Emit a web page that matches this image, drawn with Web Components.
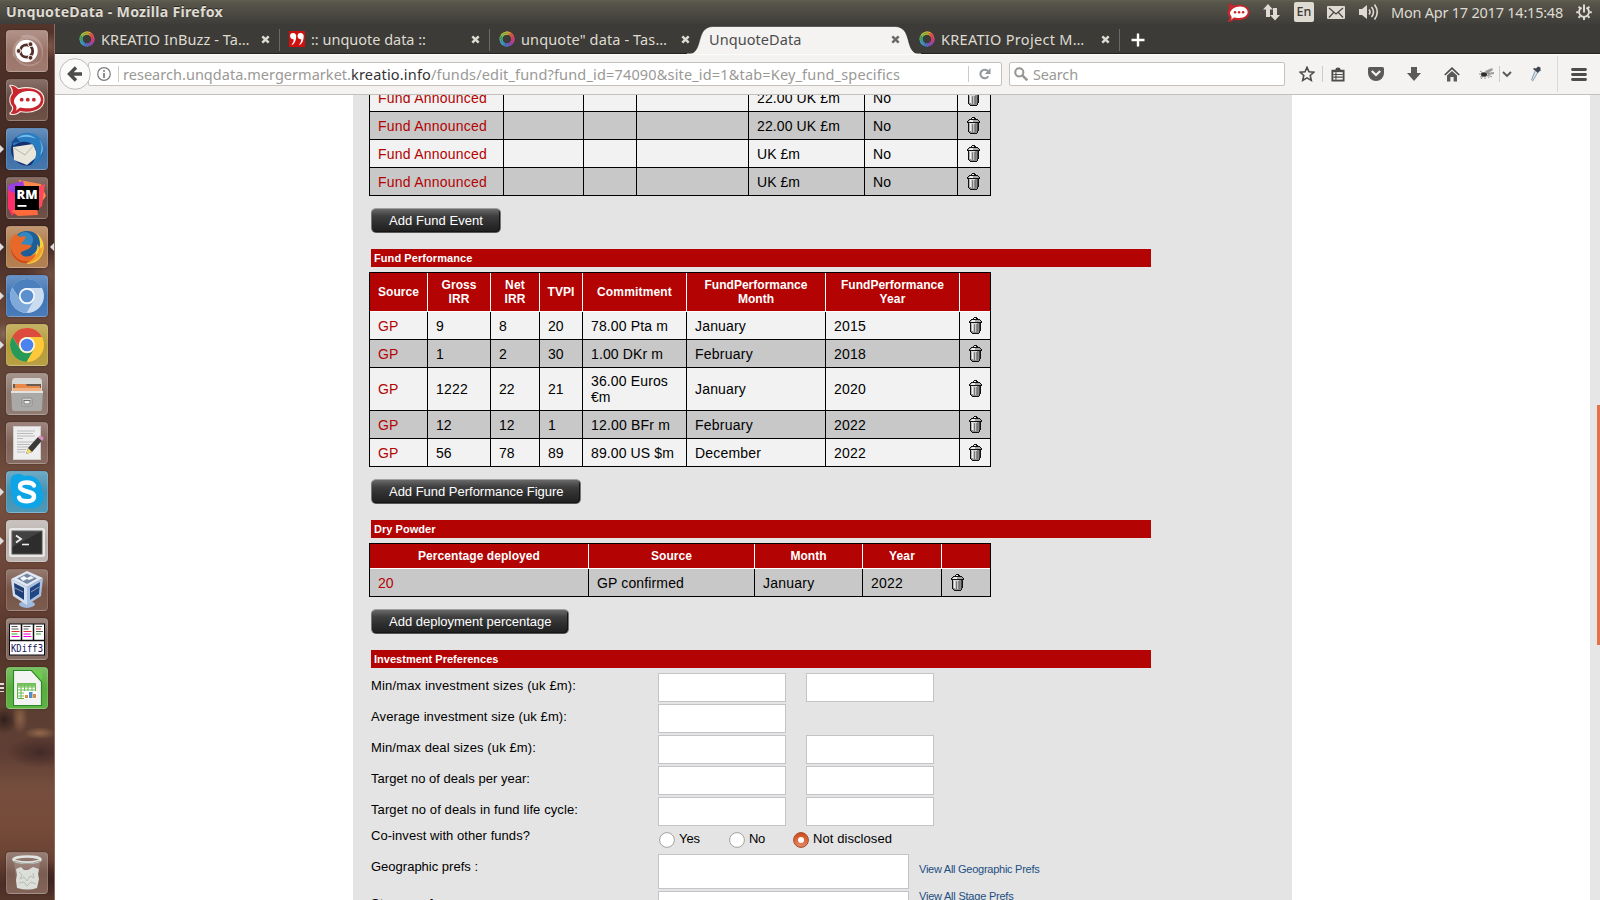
<!DOCTYPE html>
<html lang="en">
<head>
<meta charset="utf-8">
<title>UnquoteData</title>
<style>
html,body{margin:0;padding:0;height:100%;overflow:hidden;background:#fff}
body{font-family:"Liberation Sans",Arial,sans-serif;font-size:14px;color:#000}
</style>
</head>
<body>
<desktop-shell></desktop-shell>
<script>
const UI = '"Noto Sans","Open Sans",sans-serif';
const define = (name, html, extra) => customElements.define(name, class extends HTMLElement {
  constructor(){ super(); this.attachShadow({mode:'open'}); }
  connectedCallback(){
    if (this.done) return; this.done = true;
    this.shadowRoot.innerHTML = typeof html === 'function' ? html(this) : html;
    if (extra) extra(this);
  }
});

/* Text run whose tracking is adjusted to a given advance width. */
const runs = [];
define('fit-text', '<style>:host{display:inline-block;white-space:pre}</style><span><slot></slot></span>', el => runs.push(el));
const fitAll = () => runs.forEach(el => {
  const span = el.shadowRoot.querySelector('span');
  const w = parseFloat(el.getAttribute('w')), n = el.textContent.length;
  if (!w) return;
  span.style.letterSpacing = ((w - span.getBoundingClientRect().width) / n).toFixed(3) + 'px';
});

const ringColors = ['#e8a33a','#e2574c','#d9418c','#8a4fc0','#3f7fd0','#35a7c9','#3fb568','#a8c83a'];
const ring = `<svg width="16" height="16" viewBox="0 0 16 16">${ringColors.map((c,i)=>`<path d="M7 .3Q12.800 .2 13.600 4.600L11.600 5.600Q9.600 2.800 5.800 3.100Z" fill="${c}" transform="rotate(${i*45} 8 8)"/>`).join('')}<circle cx="8" cy="8" r="6" fill="none" stroke="#8a2f3a" stroke-opacity=".45" stroke-width="1"/></svg>`;
const quote = '<svg width="16" height="16" viewBox="0 0 16 16"><path fill="#d20f0f" d="M0 0h16v16H0z"/><path fill="#fff" d="M4.200 2a2.900 2.900 0 0 1 3 3.200c0 4-1.300 6.900-4 8.900l-.6-.7C4.200 11.800 4.700 10.300 4.700 8.200A2.900 2.900 0 0 1 1.100 5.100 3 3 0 0 1 4.200 2zM11.700 2a2.900 2.900 0 0 1 3 3.200c0 4-1.300 6.900-4 8.900l-.6-.7c1.600-1.600 2.100-3.100 2.100-5.200a2.900 2.900 0 0 1-3.600-3.100A3 3 0 0 1 11.700 2z"/></svg>';
const cross = c => `<svg width="9" height="9" viewBox="0 0 9 9"><path d="M1.300 1.300l6.400 6.400M7.700 1.300L1.300 7.700" stroke="${c}" stroke-width="2.500"/></svg>`;

const rocket = '<path d="M1 2c4 0 7 2 9 4 16-4 29 2 29 12S27 34 12 31c-3 3-7 4-11 3 3-3 4-5 3-8C0 22 0 14 4 11 4 7 3 4 1 2z" fill="#c9252d"/><path d="M8 14c4-5 10-6 15-6 8 0 13 5 13 10s-6 10-15 10c-4 0-7-1-9-1l-5 4c2-3 1-5 0-7-3-3-2-7 1-10z" fill="#fff"/><circle cx="14" cy="18" r="2.200" fill="#c9252d"/><circle cx="21" cy="18" r="2.200" fill="#c9252d"/><circle cx="28" cy="18" r="2.200" fill="#c9252d"/>';

/* ---------- top panel ---------- */
define('top-panel', `<style>
:host{display:flex;height:24px;box-sizing:border-box;padding:0 8px 0 6px;align-items:center;background:linear-gradient(#625f52 0,#59564b 2px,#3e3d39 24px);color:#dfdbd2;font:14.500px/24px ${UI}}
b{font-size:14.200px;text-shadow:0 -1px 0 #2a2926}
.sp{flex:1} svg{display:block;flex:none}
.en{width:20px;height:20px;border-radius:2px;background:#dfdbd2;color:#3c3b37;font:500 12.500px/20px ${UI};text-align:center;margin:0 13px 0 14px}
</style>
<b><fit-text w="217">UnquoteData - Mozilla Firefox</fit-text></b><span class="sp"></span>
<svg width="23" height="20" viewBox="0 0 40 35" preserveAspectRatio="none">${rocket}</svg>
<svg style="margin-left:13px" width="17" height="18" viewBox="0 0 17 18" fill="#dfdbd2"><path d="M5 1l5 5.500H7V14H3V6.500H0zM12 17.500l-5-5.500h3V5h4v7h3z"/></svg>
<span class="en">En</span>
<svg width="18" height="13" viewBox="0 0 18 13"><rect width="18" height="13" rx="1" fill="#dfdbd2"/><path d="M2 2l7 6 7-6M2 11.500l4.500-5M16 11.500l-4.500-5" fill="none" stroke="#47463f" stroke-width="1.200"/></svg>
<svg style="margin-left:14px" width="20" height="18" viewBox="0 0 20 18"><path d="M0 6h3l5-4v14l-5-4H0z" fill="#dfdbd2"/><path d="M10 6.500q2 2.500 0 5M12.500 4q4 5 0 10M15.500 1.500q5.500 7.500 0 15" fill="none" stroke="#dfdbd2" stroke-width="1.600"/></svg>
<fit-text w="172" style="margin:0 13px 0 12px">Mon Apr 17 2017 14:15:48</fit-text>
<svg width="16" height="16" viewBox="0 0 16 16" fill="none" stroke="#dfdbd2"><path d="M5.600 3.600a5 5 0 1 0 4.800 0" stroke-width="1.900"/><path d="M8 .5v8" stroke-width="2"/><path d="M2.600 2.600l1.600 1.600M13.400 2.600l-1.600 1.600M.2 8.300h2.300M13.500 8.300h2.300M2.500 13.800l1.700-1.700M13.500 13.800l-1.700-1.700M8 13.500V16" stroke-width="2"/></svg>`);

/* ---------- launcher ---------- */
const ball = (a,b,c,hub) => `<circle cx="21" cy="21" r="17" fill="${c}"/><path d="M6.300 12.500A17 17 0 0 1 36 13H21a8 8 0 0 0-7.500 10.500z" fill="${a}"/><path d="M6.300 12.500A17 17 0 0 0 20.500 38l7.500-13a8 8 0 0 1-14.500-1z" fill="${b}"/><circle cx="21" cy="21" r="8" fill="#fff" fill-opacity=".85"/><circle cx="21" cy="21" r="6.300" fill="${hub}"/>`;
const apps = [
 ['#9b7468', '<path d="M7 27C3 11 20 2 32 9 20 3 8 14 12 25M14 6c18-6 29 12 20 26 6-15-4-25-16-23M36 30C26 42 6 36 8 19c2 14 13 19 24 13" fill="#fff" opacity=".2"/><circle cx="20.500" cy="21" r="11.200" fill="#fff"/><circle cx="20.500" cy="21" r="6.200" fill="none" stroke="#542f28" stroke-width="2.800" stroke-dasharray="11.600 1.400" stroke-dashoffset="-7"/><g fill="#542f28" stroke="#fff" stroke-width=".9"><circle cx="12.600" cy="21" r="2.400"/><circle cx="24.500" cy="14.200" r="2.400"/><circle cx="24.500" cy="27.800" r="2.400"/></g>'],
 ['#66483e', `<g transform="translate(3.500 5) scale(.87)"><g stroke="#f7eeea" stroke-width="2.500" stroke-linejoin="round">${rocket.replace(/<circle.*/,'')}</g>${rocket}</g>`],
 ['#3c6fa8', '<circle cx="21" cy="21.500" r="16" fill="#14306e"/><path d="M7 19l20-3 5 12-11 9-13-5z" fill="#e9e6dc"/><path d="M8 20l11 7 9-10" fill="none" stroke="#b9b5a8"/><path d="M7 18C7 9 15 4 24 5c10 1 14 10 13 18-1 8-6 13-13 15 7-7 8-16 3-21-6-5-13-4-20 1z" fill="#2a7cc0"/><path d="M27 6c7 3 11 12 7 21 5-3 4-15-7-21zM10 11c6-5 14-6 20 0-7-3-13-3-20 0z" fill="#74bde8"/><path d="M5 15l5-6 4 5z" fill="#1b4d92"/>'],
 ['#66483e', '<path d="M13 3l22 4 5 12-8 11-20-7z" fill="#ff8a4c"/><path d="M2 8l15-4 3 12-13 14-5-5z" fill="#9a3fe0"/><path d="M2 13l8 4 2 15-6 7-4-8z" fill="#fc2f6b"/><path d="M5 34l14-4 12 2 1 6-20 1z" fill="#ff6a3d"/><path d="M31 10l8-3-3 22-6 5z" fill="#fc4a5a"/><rect x="9" y="9" width="24" height="24" fill="#000"/><text x="10.500" y="21.500" font-family="Open Sans,sans-serif" font-weight="800" font-size="13" fill="#fff" textLength="21" lengthAdjust="spacingAndGlyphs">RM</text><rect x="11.500" y="28" width="9" height="1.800" fill="#fff"/>'],
 ['#b07a4a', '<circle cx="21" cy="20" r="15" fill="#1d5d98"/><circle cx="19" cy="14" r="8" fill="#3f9bd0" opacity=".7"/><path d="M30 7c7 5 9 12 7 19-2 8-9 12-16 12l5-9c5-3 6-7 5-11 2 2 2 4 2 5 2-5 1-11-3-16z" fill="#f9cf3c"/><path d="M5 13c1-2 3-4 5-5l4 3 5-1c1 2 0 4-3 6l-1 2c5 1 8 0 11 2-2 1-2 3-6 4-3 1-6 2-5 4 3 4 10 3 15-1-1 7-7 11-13 10C8 36 2 26 5 13z" fill="#e8682a"/><path d="M5 22c2 11 14 18 26 10-7 7-17 6-22 0-3-3-4-7-4-10z" fill="#c8401b"/><path d="M37 20c0 10-8 17-17 17 8-3 13-9 13-17l2 3z" fill="#f3a02a"/>'],
 ['#3f74b4', ball('#4b7fbd','#7fa9da','#c9dcf0','#5b8fce')],
 ['#b59c3a', ball('#dc4b3e','#279a5a','#fdc93b','#4a82ee')],
 ['#8c766c', '<path d="M6 9q0-4 3-4h24q3 0 3 4v10H6z" fill="#d6d6d4"/><path d="M7 11h28v9H7z" fill="#6b5a50"/><path d="M9 11h11l1 2h13v7H9z" fill="#e8894a"/><path d="M7 15h28v4H7z" fill="#f0b184"/><path d="M5 18h32l-1 18q0 2-2 2H8q-2 0-2-2z" fill="#a9a9a8"/><path d="M5 18h32v2H5z" fill="#e2e2e0"/><rect x="16" y="25" width="10" height="8" rx="1.500" fill="#cfcfcf" stroke="#8a8a8a"/><rect x="18" y="27.500" width="6" height="3.500" fill="#eee" stroke="#666" stroke-width=".9"/>'],
 ['#816258', '<rect x="7.500" y="4.500" width="27" height="33" fill="#eee" stroke="#cfcfcf"/><path d="M11 9h18M11 11.500h16M11 14h18M11 16.500h6M11 20h17M11 22.500h13M11 25h14M11 27.500h9M11 30h8" stroke="#bbb" stroke-width="1"/><path d="M20 32l2-6 10-11 4 3.500L26 30z" fill="#3a3a38"/><path d="M20 32l2-6 4 4z" fill="#f1dc72"/><path d="M32 15l2-1.500q4 1 3.500 3.500L36 19z" fill="#d98fc0"/>'],
 ['#4592b4', '<path d="M5 12C2 3 14 1 18 5c10-3 19 6 18 15 4 6-1 19-11 17C14 40 4 32 6 21q-3-4-1-9z" fill="#0ea5e6"/><path d="M28 14.500C26 10.500 14 10 14 15.500c0 6 14 3.500 14 10 0 6.500-13.500 6-15 1" fill="none" stroke="#fff" stroke-width="4.400" stroke-linecap="round"/>'],
 ['#b9b1ae', '<rect x="3" y="8" width="36" height="29" rx="2.500" fill="#e9e7e5"/><rect x="6" y="11" width="30" height="23" fill="#2c2d2c" stroke="#555"/><path d="M6 11h30L6 27z" fill="#fff" opacity=".1"/><path d="M10 15.500l5 3.500-5 3.500" fill="none" stroke="#eee" stroke-width="1.800"/><path d="M16 24.500h7" stroke="#eee" stroke-width="1.600"/>'],
 ['#765447', '<path d="M14 29h14l-2 4c5 1 4 5-5 6-9-1-10-5-5-6z" fill="#9fb9dc"/><path d="M5 10l16-8 16 7-16 9z" fill="#dfe8f4"/><path d="M5 10l16 8v18L7 27z" fill="#d1dff0"/><path d="M37 9l-16 9v18l14-9z" fill="#a9c0e0"/><path d="M11 9.500l10-5 10 5-10 5.500z" fill="#5a6f8b" opacity=".8"/><path d="M14 9l4-2 3 2 4-2 3 2-5 2-2-1-4 2z" fill="#f3f6fa"/><path d="M8 14l10 5v12L9 25z" fill="#1d3f75"/><path d="M34 13l-10 6v12l9-6z" fill="#1f4784"/><path d="M9 19l8 4M33 18l-8 5" stroke="#aab" stroke-width=".9"/>'],
 ['#7d6459', '<rect x="3.500" y="6" width="35" height="31" fill="#fff" stroke="#0a0a14"/><path d="M4 22.500h35M15.500 6v16M27.500 6v16" stroke="#111" stroke-width="1.500"/><path d="M5.500 8.500h6M5.500 11h7M17.500 8.500h7M17.500 11h5M30 8.500h6M30 13.500h7" stroke="#555" stroke-width="1.200"/><path d="M5.500 13.500h8M17.500 13.500h8M30 11h5" stroke="#d33" stroke-width="1.200"/><path d="M5.500 16h6M30 16h5" stroke="#3a3" stroke-width="1.200"/><path d="M5.500 18.500h8M17.500 16h7M17.500 18.500h8" stroke="#e0c" stroke-width="1.200"/><text x="5" y="34" font-family="DejaVu Sans Mono,monospace" font-size="11" fill="#15155a" textLength="32" lengthAdjust="spacingAndGlyphs">KDiff3</text>'],
 ['#58ad3c', '<path d="M7.500 3.500h18l10 11v24h-28z" fill="#f3f3f3" stroke="#2b8a28" stroke-width="1.200"/><path d="M26 3h10v11z" fill="#6fcb4e"/><path d="M11.500 16.500h18v15h-18z" fill="#fff" stroke="#5cb445"/><path d="M11.500 16.500h18v3h-18z" fill="#7dc464"/><path d="M11.500 20h18M11.500 23h18M11.500 26h18M11.500 29h18M15 16v15M18.500 16v15M22 16v15M26 16v15" stroke="#6fbf57" stroke-width="1.100"/><path d="M18 24h13v8H18z" fill="#fff"/><path d="M19 28h3v3h-3zM27 27h3v4h-3z" fill="#e08a3c"/><path d="M23 25h3.500v6H23z" fill="#4b90cf"/>']
];
const bin = '<path d="M8 10h26l-3 25q-10 5-20 0z" fill="#fff" opacity=".16"/><path d="M10 17l5-2 3 3 4 0 5-3 6 2-1 5 1 5-2 9q-9 3-20 0l-1-8 1-5z" fill="#dcdeda"/><path d="M13 20l3 3-2 4 4-2 3 4 3-5 4 2-1-5M13 31l5-1 3 4 4-4 5 2" fill="none" stroke="#b9bcb6"/><ellipse cx="21" cy="7.500" rx="13.500" ry="3" fill="none" stroke="#e3e5e2" stroke-width="2.600"/><path d="M8 9q13 5 26 0" fill="none" stroke="#9da09c"/>';
define('app-tile', el => {
  const t = el.hasAttribute('bin') ? ['#7b5c50', bin] : apps[+el.getAttribute('app')];
  return `<style>:host{display:block;position:relative;width:42px;height:42px;flex:none}
  .t{box-sizing:border-box;width:42px;height:42px;border-radius:4px;background:linear-gradient(rgba(255,255,255,.22),rgba(255,255,255,0) 50%,rgba(255,255,255,.05)),${t[0]};border:1px solid rgba(255,255,255,.14);box-shadow:0 0 2px rgba(0,0,0,.4)}
  svg{display:block;margin:-1px}
  i{position:absolute;top:17px;width:0;height:0;border:4px solid transparent}
  .l{left:-6px;border-left-color:#ddd;border-right:0}.r{right:-6px;border-right-color:#ddd;border-left:0}
  .m{left:-6px;top:16px;width:4px;height:9px;border:0;background:repeating-linear-gradient(#ddd 0 2px,transparent 2px 4px)}</style>
  <div class="t"><svg width="42" height="42" viewBox="0 0 42 42">${t[1]}</svg></div>
  ${el.hasAttribute('run')?'<i class="l"></i>':''}${el.hasAttribute('active')?'<i class="r"></i>':''}${el.hasAttribute('many')?'<i class="m"></i>':''}`;
});
define('app-launcher', `<style>
:host{display:flex;flex-direction:column;gap:7px;box-sizing:border-box;width:55px;padding:6px 0 6px 6px;border-right:1px solid #8b6a5e;
background:radial-gradient(ellipse 12px 22px at 4px 130px,#3a241f,transparent),radial-gradient(ellipse 20px 14px at 48px 22px,#80574b,transparent),radial-gradient(ellipse 24px 26px at 50px 250px,#805e4e99,transparent),radial-gradient(ellipse 12px 12px at 4px 310px,#9b806c99,transparent),radial-gradient(ellipse 16px 6px at 40px 709px,#93694b,transparent),radial-gradient(ellipse 8px 16px at 20px 694px,#8a6048,transparent),radial-gradient(ellipse 14px 14px at 4px 696px,#33201b,transparent),radial-gradient(ellipse 34px 16px at 40px 728px,#432a27,transparent),radial-gradient(ellipse 14px 18px at 52px 855px,#3b2320,transparent),
linear-gradient(#54352b 0,#482d26 80px,#432a24 220px,#6a4739 290px,#634538 340px,#5d4036 400px,#76503f 470px,#6b4439 560px,#553529 620px,#5b3e31 680px,#603f34 730px,#764e3d 765px,#764b3a 800px,#6c4434 830px,#4b2d26 860px,#55362a 876px)}
.sp{flex:1}</style>
${apps.map((a,i)=>`<app-tile app="${i}" ${[2,4,5,6,9,10].includes(i)?'run':''} ${i===4?'active':''} ${i===13?'many':''}></app-tile>`).join('')}
<span class="sp"></span><app-tile bin></app-tile>`);

/* ---------- browser ---------- */
define('browser-tab', el => {
  const on = el.hasAttribute('on'), icon = el.getAttribute('icon');
  return `<style>:host{display:flex;position:relative;align-items:center;width:210px;height:30px;box-sizing:border-box;padding:1px 9px 1px 10px;flex:none;color:${on?'#4c4c4c':'#dfdbd2'};font:14.500px/28px ${UI}}
  .bg{position:absolute;left:-12px;top:2px;width:234px;height:28px;display:block}
  .c{position:relative;display:flex;align-items:center;flex:1}
  .i{width:16px;margin-right:6px;display:flex} .sp{flex:1} svg{display:block}
  :host(:not([on]):not([bare]))::after{content:"";position:absolute;right:-1px;top:5px;height:22px;width:1px;background:#6b6963}</style>
  ${on?'<svg class="bg" viewBox="0 0 234 28"><path d="M0 28.500C18 28 7 1 26 .5H208C227 1 216 28 234 28.500Z" fill="#f4f3f1" stroke="#1f1e1c" stroke-opacity=".5"/><path d="M0 27.500h234v.5H0z" fill="#f4f3f1"/></svg>':''}
  <span class="c">${icon?`<span class="i">${icon==='q'?quote:ring}</span>`:''}<slot></slot><span class="sp"></span>${cross(on?'#6b6a66':'#dfdbd2')}</span>`;
});
define('tab-strip', `<style>:host{display:flex;height:30px;box-sizing:border-box;padding-left:14px;background:#3c3b37;box-shadow:inset 0 -1px #242321}
.plus{margin:9px 0 0 12px;display:block}browser-tab[on]{z-index:1}</style>
<browser-tab icon="k"><fit-text w="148.500">KREATIO InBuzz - Ta…</fit-text></browser-tab>
<browser-tab icon="q"><fit-text w="115">:: unquote data ::</fit-text></browser-tab>
<browser-tab icon="k" bare><fit-text w="146">unquote" data - Tas…</fit-text></browser-tab>
<browser-tab on><fit-text w="92.500">UnquoteData</fit-text></browser-tab>
<browser-tab icon="k"><fit-text w="143.500">KREATIO Project M…</fit-text></browser-tab>
<svg class="plus" width="14" height="14" viewBox="0 0 14 14"><path d="M7 .5v13M.5 7h13" stroke="#fff" stroke-width="2.400"/></svg>`);

define('nav-bar', `<style>
:host{display:flex;height:41px;box-sizing:border-box;position:relative;align-items:center;padding-left:33px;background:#f4f3f1;border-bottom:1px solid #c3c0bb;font:14.500px/22px ${UI};color:#9a9996;box-shadow:inset 0 1px #fcfcfb}
.back{position:absolute;left:4px;top:4px;display:block}
.box{box-sizing:border-box;height:24px;border:1px solid #c5c2bd;border-radius:2px;background:#fff;display:flex;align-items:center}
svg{display:block;flex:none} .v{width:1px;height:16px;background:#cfccc8;flex:none}
em{font-style:normal;color:#333} .sp{flex:1}
.tools{display:flex;align-items:center;flex:1;height:40px}</style>
<div class="box" style="width:914px;padding:0 10px 0 8px">
<svg width="14" height="14" viewBox="0 0 14 14" fill="none" stroke="#7a7a78"><circle cx="7" cy="7" r="6.300" stroke-width="1.200"/><path d="M7 6v5M7 3v1.800" stroke-width="1.700"/></svg>
<span class="v" style="margin:0 4px 0 7px"></span>
<fit-text w="228">research.unqdata.mergermarket.</fit-text><em><fit-text w="80">kreatio.info</fit-text></em><fit-text w="469">/funds/edit_fund?fund_id=74090&amp;site_id=1&amp;tab=Key_fund_specifics</fit-text>
<span class="sp"></span><span class="v" style="margin-right:10px"></span>
<svg width="12" height="12" viewBox="0 0 12 12"><path d="M9.300 8.300A4.300 4.300 0 1 1 9 3.200" fill="none" stroke="#8f969d" stroke-width="2"/><path d="M11.500 0v6H5.800z" fill="#8f969d"/></svg></div>
<svg class="back" width="34" height="34" viewBox="0 0 34 34"><circle cx="16" cy="16" r="15.300" fill="#fbfbfa" stroke="#bfbcb7"/><path d="M23 16H12M17 9.500L10.500 16l6.500 6.500" fill="none" stroke="#4c4c4a" stroke-width="3.400"/></svg>
<div class="box" style="width:276px;margin-left:7px;padding-left:4px"><svg width="14" height="14" viewBox="0 0 14 14" fill="none" stroke="#979693"><circle cx="5.300" cy="5.300" r="4.100" stroke-width="2"/><path d="M8.300 8.300l5 5" stroke-width="2.500"/></svg><fit-text w="45" style="margin-left:5px">Search</fit-text></div>
<div class="tools">
<svg style="margin-left:14px" width="16" height="16" viewBox="0 0 16 16"><path d="M8 1.400l2 4.400 4.800.5-3.600 3.200 1.100 4.900L8 11.900l-4.300 2.500 1.100-4.900L1.200 6.300 6 5.800z" fill="none" stroke="#4c4c4a" stroke-width="1.600"/></svg>
<span class="v" style="margin:0 8px 0 7px"></span>
<svg width="14" height="15" viewBox="0 0 15 16"><path d="M.5 3h4Q5 .5 7.500.5T10.500 3h4v12.500H.5z" fill="#4c4c4a"/><path d="M2.500 5.500h10v8h-10z" fill="#f4f3f1"/><path d="M2.500 8h10M2.500 10.800h10M5.300 5.500v8" stroke="#4c4c4a" stroke-width="1.200"/></svg>
<svg style="margin-left:23px" width="16" height="14" viewBox="0 0 16 14"><path d="M1.500 0h13Q16 0 16 1.500V6a8 8 0 0 1-16 0V1.500Q0 0 1.500 0z" fill="#5a5a58"/><path d="M3.800 4L8 8l4.200-4" fill="none" stroke="#f4f3f1" stroke-width="2.200"/></svg>
<svg style="margin-left:23px" width="14" height="14" viewBox="0 0 14 14"><path d="M4 0h6v6h4l-7 8-7-8h4z" fill="#5a5a58"/></svg>
<svg style="margin-left:23px" width="16" height="15" viewBox="0 0 16 15"><path d="M.8 8L8 1.200 15.200 8" fill="none" stroke="#4c4c4a" stroke-width="1.700"/><path d="M3 8.500L8 4l5 4.500V14.500H9.600V10H6.400v4.500H3z" fill="#5a5a58"/></svg>
<svg style="margin-left:19px" width="16" height="14" viewBox="0 0 16 14"><path d="M6 4l7-3 1 2-6 4zM8 6l7-1v2l-6 1z" fill="#9a9a98"/><ellipse cx="5" cy="7.500" rx="3" ry="2.200" fill="#2c2c2a"/><path d="M1 4l3 2M0 7h2M2 12l2-3M6 12l0-3M10 11L8 8M13 10L9 8M1 10l2-1" stroke="#777" stroke-width=".8"/></svg>
<span class="v" style="margin:0 2px 0 4px"></span>
<svg width="10" height="7" viewBox="0 0 10 7"><path d="M1 1l4 4 4-4" fill="none" stroke="#555" stroke-width="1.800"/></svg>
<svg style="margin-left:18px" width="11" height="16" viewBox="0 0 11 16"><path d="M5 5L1.500 14l1.200 1L8 6" fill="#cfe0f0" stroke="#8a98a8" stroke-width=".9"/><path d="M3 3l5 4 1-1.500L10.500 5V1.500L8 .5 6 2.500 4 2z" fill="#3f4650"/></svg>
<span class="v" style="margin:0 13px 0 16px;height:36px;background:#dad8d4"></span>
<svg width="16" height="13" viewBox="0 0 16 13"><path d="M1.500 1.500h13M1.500 6.500h13M1.500 11.500h13" stroke="#4c4c4a" stroke-width="2.800" stroke-linecap="round"/></svg>
</div>`);

/* ---------- page parts ---------- */
define('trash-icon', `<style>:host{display:block;width:13px;height:17px;margin:-1px 0 0 1px}svg{display:block}</style>
<svg width="13" height="17" viewBox="0 0 13 17" shape-rendering="crispEdges"><path fill="#111" d="M5 0h3v1h1v1h2v1h1v1h1v2h-1v8h-1v2h-1v1H3v-1H2v-1H1V6H0V4h1V3h1V2h2V1h1z"/><path fill="#eee" d="M5 1h2v1H5z"/><path fill="#a8a8a8" d="M2 3h9v1h1v1H1V4h1z"/><path fill="#efefef" d="M2 4h4v1H2zM3 3h3v1H3z"/><path fill="#8a8a8a" d="M2 6h9v8h-1v2H3v-1H2z"/><path fill="#d8d8d8" d="M2 6h6v1H2z"/><path fill="#f2f2f2" d="M3 7h1v7H3z"/><path fill="#b0b0b0" d="M2 7h1v7H2z"/><path fill="#c8c8c8" d="M4 7h1v8H4zM6 7h1v8H6z"/><path fill="#777" d="M5 8h1v7H5zM8 7h1v8H8z"/><path fill="#444" d="M10 6h1v8h-1z"/></svg>`);

define('section-bar', `<style>:host{display:block;box-sizing:border-box;width:780px;height:18px;padding-left:3px;margin-left:18px;background:#b30303;color:#fff;font:bold 11px/18px "Liberation Sans",sans-serif}</style><slot></slot>`);
define('dark-button', el => `<style>:host{display:block;margin:12px 0 16px 18px;height:25px}
button{display:block;box-sizing:border-box;width:${el.getAttribute('w')}px;height:25px;border:1px solid;border-color:#a0a0a0 #777 #555 #777;border-radius:5px;background:linear-gradient(#6a6a6a,#3f3f3f 30%,#2f2f2f 60%,#1f1f1f);box-shadow:inset -1px -1px #151515;color:#fff;font:13px/15px "Liberation Sans",sans-serif;padding:4px 0 4px 17px;text-align:left}</style><button><slot></slot></button>`);

const tables = {
 events:{cols:[134,80,53,112,116,93,32],rows:[
  ['Fund Announced|109','','','','22.00 UK £m|83','No|18','#'],['Fund Announced|109','','','','22.00 UK £m|83','No|18','#'],
  ['Fund Announced|109','','','','UK £m|43','No|18','#'],['Fund Announced|109','','','','UK £m|43','No|18','#']]},
 perf:{cols:[58,63,49,43,104,139,134,30],hh:38,head:['Source|41','Gross|35<br>IRR|21','Net|20<br>IRR|21','TVPI|27','Commitment|75','FundPerformance|103<br>Month|36','FundPerformance|103<br>Year|26',''],rows:[
  ['GP','9','8','20','78.00 Pta m|77','January|51','2015|32','#'],['GP','1','2','30','1.00 DKr m|72','February|58','2018|32','#'],
  ['GP','1222|32','22','21','36.00 Euros|77<br>€m','January|51','2020|32','#'],['GP','12','12','1','12.00 BFr m|79','February|58','2022|32','#'],['GP','56','78','89','89.00 US $m|83','December|66','2022|32','#']],first:1},
 powder:{cols:[219,166,108,79,48],hh:24,head:['Percentage deployed|122','Source|41','Month|36','Year|26',''],rows:[['20','GP confirmed|87','January|51.500','2022|32','#']],first:0}
};
const cell = s => s === '#' ? '<trash-icon></trash-icon>' : s.split('<br>').map(p => { const [t,w] = p.split('|'); return w ? `<fit-text w="${w}">${t}</fit-text>` : t; }).join('<br>');
define('data-table', el => {
  const k = el.getAttribute('kind'), t = tables[k], first = t.first ?? 1;
  return `<style>:host{display:block;box-sizing:border-box;width:622px;margin-left:16px;border:1px solid #000;${t.head?'margin-top:5px':'border-top:0;margin-top:-11px'}}
  .r{display:grid;grid-template-columns:${t.cols.map(c=>c+'px').join(' ')};height:27px;border-bottom:1px solid #000;background:#f2f2f2}
  .r:last-child{border-bottom:0}.r.g{background:#c8c8c8}
  .r>div{box-sizing:border-box;border-right:1px solid #000;padding:1px 4px 0 8px;display:flex;align-items:center;line-height:16px;min-width:0}
  .r>div:last-child{border-right:0}.r>div:first-child{color:#b30303}
  .r.tall{height:42px}.r.tall>div{padding-top:0}
  .r.h{height:${t.hh}px;background:#b30303;border-bottom-color:#fff}
  .r.h>div{border-right-color:#fff;color:#fff;font:bold 12px/14px "Liberation Sans",sans-serif;justify-content:center;text-align:center;padding:0}.r.h>div:last-child{border-right:0}</style>
  ${t.head?`<div class="r h">${t.head.map(h=>`<div><span>${cell(h)}</span></div>`).join('')}</div>`:''}
  ${t.rows.map((r,i)=>`<div class="r ${(i+first)%2===0?'g':''} ${r.some(c=>c.includes('<br>'))?'tall':''}">${r.map(c=>`<div><span>${cell(c)}</span></div>`).join('')}</div>`).join('')}`;
});

define('form-row', el => {
  const f = +el.getAttribute('fields') || 0;
  return `<style>:host{display:grid;grid-template-columns:287px 128px 148px;height:29px;font:13px/15px "Liberation Sans",sans-serif}
  :host([kind=area]){height:35px;grid-template-columns:287px 251px auto}:host([kind=radio]){height:24px;grid-template-columns:287px auto}
  label{padding-top:5px}:host([kind=radio]) label{padding-top:0}
  input,textarea{box-sizing:border-box;width:128px;height:29px;border:1px solid #c2c4c7;border-radius:0;background:#fff;margin:0;padding:2px;resize:none;outline:0;display:block}
  input+input{margin-left:20px} textarea{width:251px;height:35px}
  .lnk{margin-left:10px;color:#1c4f82;font:11px/12px "Liberation Sans",sans-serif}</style>
  <label><fit-text w="${el.getAttribute('lw')}">${el.getAttribute('label')}</fit-text></label>
  ${'<input type="text">'.repeat(f)}${el.getAttribute('kind')==='area'?`<textarea></textarea><a class="lnk" style="margin-top:${el.getAttribute('drop')}px"><slot></slot></a>`:'<slot></slot>'}`;
});
define('radio-option', el => `<style>:host{display:flex;gap:4px;height:16px;line-height:15px}
svg{display:block}span{margin-top:-1px}</style><svg width="16" height="16" viewBox="0 0 16 16"><defs><linearGradient id="g" x2="0" y2="1"><stop stop-color="#cf4a1a"/><stop offset="1" stop-color="#e58a66"/></linearGradient></defs>${el.hasAttribute('on')?'<circle cx="8" cy="8" r="7.400" fill="url(#g)" stroke="#a04a2c"/><circle cx="8" cy="8" r="3" fill="#fff"/>':'<circle cx="8" cy="8" r="7.400" fill="#fff" stroke="#a3a19e"/>'}</svg><span><slot></slot></span>`);
define('radio-set', `<style>:host{display:flex;padding:4px 0 0 1px}radio-option{flex:none}</style>
<radio-option style="width:70px"><fit-text w="21">Yes</fit-text></radio-option><radio-option style="width:64px"><fit-text w="16">No</fit-text></radio-option><radio-option on><fit-text w="79">Not disclosed</fit-text></radio-option>`);

define('fund-page', `<style>:host{display:grid;grid-template-columns:298px 939px 298px 10px;height:805px;overflow:hidden;background:#fff}
main{grid-column:2;background:#e4e4e4;overflow:hidden;height:805px}
.form{display:flex;flex-direction:column;gap:2px;padding:5px 0 0 18px}
.bar{grid-column:4;background:#e6e6e6;display:flex;justify-content:flex-end;padding-top:310px}
.bar i{width:3px;height:240px;background:#e5714a}</style>
<main>
<data-table kind="events"></data-table>
<dark-button w="130"><fit-text w="94">Add Fund Event</fit-text></dark-button>
<section-bar><fit-text w="98.500">Fund Performance</fit-text></section-bar>
<data-table kind="perf"></data-table>
<dark-button w="210"><fit-text w="174.500">Add Fund Performance Figure</fit-text></dark-button>
<section-bar><fit-text w="61.500">Dry Powder</fit-text></section-bar>
<data-table kind="powder"></data-table>
<dark-button w="198"><fit-text w="162.500">Add deployment percentage</fit-text></dark-button>
<section-bar><fit-text w="124.500">Investment Preferences</fit-text></section-bar>
<div class="form">
<form-row label="Min/max investment sizes (uk £m):" lw="205" fields="2"></form-row>
<form-row label="Average investment size (uk £m):" lw="196" fields="1"></form-row>
<form-row label="Min/max deal sizes (uk £m):" lw="165" fields="2"></form-row>
<form-row label="Target no of deals per year:" lw="159" fields="2"></form-row>
<form-row label="Target no of deals in fund life cycle:" lw="207" fields="2"></form-row>
<form-row kind="radio" label="Co-invest with other funds?" lw="159"><radio-set></radio-set></form-row>
<form-row kind="area" label="Geographic prefs :" lw="107" drop="9"><fit-text w="120.500">View All Geographic Prefs</fit-text></form-row>
<form-row kind="area" label="Stage prefs :" lw="76" drop="-1"><fit-text w="94.500">View All Stage Prefs</fit-text></form-row>
</div></main><div class="bar"><i></i></div>`);

define('desktop-shell', `<style>:host{display:grid;grid-template:24px 876px / 55px 1545px;width:1600px;height:900px;overflow:hidden}
top-panel{grid-column:1/3}.win{display:flex;flex-direction:column;min-width:0}</style>
<top-panel></top-panel><app-launcher></app-launcher><div class="win"><tab-strip></tab-strip><nav-bar></nav-bar><fund-page></fund-page></div>`);
fitAll();
</script>
</body>
</html>
